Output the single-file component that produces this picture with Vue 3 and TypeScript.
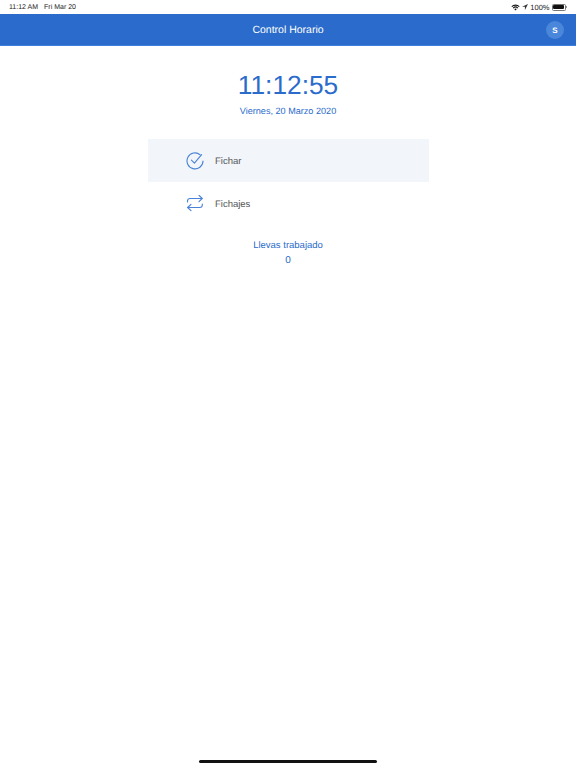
<script setup lang="ts">
const clock = "11:12:55";
const today = "Viernes, 20 Marzo 2020";
</script>

<template>
  <div class="page">
    <div class="status">
      <div class="status-left">
        <span>11:12 AM</span>
        <span>Fri Mar 20</span>
      </div>
      <div class="status-right">
        <svg width="9" height="7" viewBox="0 0 10 8">
          <path d="M0.3 2.6a6.6 6.6 0 0 1 9.4 0L8.8 3.5a5.3 5.3 0 0 0-7.6 0z" fill="#111" />
          <path d="M1.9 4.2a4.4 4.4 0 0 1 6.2 0L7.2 5.1a3.1 3.1 0 0 0-4.4 0z" fill="#111" />
          <path d="M3.5 5.8a2.1 2.1 0 0 1 3 0L5 7.4z" fill="#111" />
        </svg>
        <svg class="arrow" width="6" height="6" viewBox="0 0 7 7">
          <path d="M7 0L0 3.2h3.4V7z" fill="#333" />
        </svg>
        <span class="percent">100%</span>
        <div class="battery">
          <div class="battery-fill"></div>
        </div>
        <div class="battery-tip"></div>
      </div>
    </div>

    <header class="topbar">
      <span class="title">Control Horario</span>
      <div class="avatar">S</div>
    </header>

    <main class="content">
      <div class="clock">{{ clock }}</div>
      <div class="date">{{ today }}</div>

      <nav class="menu">
        <div class="row active">
          <svg width="18" height="18" viewBox="0 0 18 18" fill="none" stroke="#4a83d6" stroke-width="1.1" stroke-linecap="round" stroke-linejoin="round">
            <path d="M14.2 2.8A8 8 0 1 0 17 9" />
            <path d="M5.4 8.2L8.4 11.2L15.6 2.6" />
          </svg>
          <span>Fichar</span>
        </div>
        <div class="row">
          <svg width="18" height="18" viewBox="0 0 18 18" fill="none" stroke="#4a83d6" stroke-width="1.1" stroke-linecap="round" stroke-linejoin="round">
            <path d="M1.5 7V6A2.5 2.5 0 0 1 4 3.5H16" />
            <path d="M13 0.3L16.2 3.5L13 6.7" />
            <path d="M16.3 9v1A2.5 2.5 0 0 1 13.8 12.5H1.8" />
            <path d="M5 9.3L1.6 12.5L5 15.7" />
          </svg>
          <span>Fichajes</span>
        </div>
      </nav>

      <div class="worked">Llevas trabajado</div>
      <div class="worked-value">0</div>
    </main>

    <div class="home-bar"></div>
  </div>
</template>

<style scoped>
.page {
  display: flex;
  flex-direction: column;
  width: 576px;
  height: 768px;
  background: #fff;
  font-family: "Liberation Sans", Arial, sans-serif;
  text-rendering: geometricPrecision;
}

.status {
  display: flex;
  justify-content: space-between;
  align-items: center;
  height: 14px;
  padding: 0 9px 0 9px;
  box-sizing: border-box;
  font-size: 7px;
  color: #222;
}

.status-left {
  display: flex;
  gap: 6px;
}

.status-right {
  display: flex;
  align-items: center;
}

.arrow {
  margin-left: 2px;
}

.percent {
  margin-left: 2px;
  margin-right: 2px;
  font-size: 7.5px;
}

.battery {
  width: 11px;
  height: 4px;
  padding: 0.5px;
  border: 0.5px solid #777;
  border-radius: 1.5px;
  box-sizing: content-box;
}

.battery-fill {
  height: 100%;
  background: #111;
  border-radius: 1px;
}

.battery-tip {
  width: 1px;
  height: 2px;
  margin-left: 0.5px;
  background: #999;
}

.topbar {
  display: flex;
  align-items: center;
  justify-content: center;
  position: relative;
  height: 32px;
  background: #2a6bcb;
  border-bottom: 1px solid #3f80de;
  box-sizing: border-box;
  color: #fff;
}

.title {
  font-size: 10.5px;
}

.avatar {
  position: absolute;
  top: 7px;
  right: 12px;
  display: flex;
  align-items: center;
  justify-content: center;
  width: 18px;
  height: 18px;
  border-radius: 50%;
  background: #4a86d9;
  font-size: 8px;
  font-weight: bold;
}

.content {
  display: flex;
  flex-direction: column;
  align-items: center;
  flex: 1;
  color: #2a6bcb;
}

.clock {
  margin-top: 23px;
  font-size: 26.3px;
  line-height: 32px;
}

.date {
  margin-top: 4px;
  font-size: 9.1px;
  line-height: 12px;
}

.menu {
  display: flex;
  flex-direction: column;
  width: 281px;
  margin-top: 22px;
}

.row {
  display: flex;
  align-items: center;
  gap: 11.5px;
  height: 43px;
  padding-left: 38px;
  box-sizing: border-box;
  color: #555;
  font-size: 9.5px;
}

.row span {
  padding-top: 1px;
}

.row.active {
  background: #f2f5fa;
}

.worked {
  margin-top: 15px;
  font-size: 9.5px;
  line-height: 12px;
}

.worked-value {
  margin-top: 3px;
  font-size: 10px;
  line-height: 12px;
}

.home-bar {
  align-self: center;
  width: 178px;
  height: 3px;
  margin-bottom: 5px;
  border-radius: 2px;
  background: #111;
}
</style>

<style>
html,
body {
  margin: 0;
  background: #fff;
}
</style>
